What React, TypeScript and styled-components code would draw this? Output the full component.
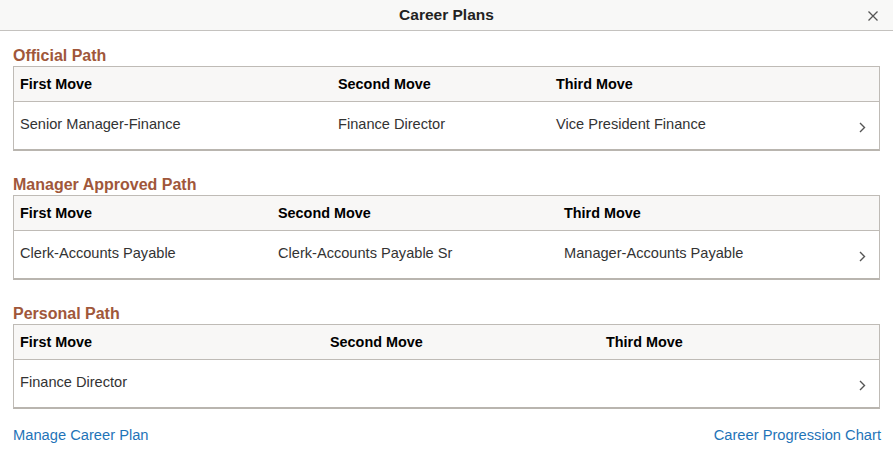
import React, { ReactElement } from 'react'
import styled, { createGlobalStyle } from 'styled-components'

interface Path {
    title: string;
    cols: [number, number];
    moves: string[];
}

const paths: Path[] = [
    { title: 'Official Path', cols: [318, 218], moves: ['Senior Manager-Finance', 'Finance Director', 'Vice President Finance'] },
    { title: 'Manager Approved Path', cols: [258, 286], moves: ['Clerk-Accounts Payable', 'Clerk-Accounts Payable Sr', 'Manager-Accounts Payable'] },
    { title: 'Personal Path', cols: [310, 276], moves: ['Finance Director', '', ''] },
]

const GlobalStyle = createGlobalStyle`
    html, body {
        margin: 0;
        padding: 0;
        background: #ffffff;
        font-family: "Liberation Sans", Arial, sans-serif;
        color: #333333;
    }
`

const Dialog = styled.div`
    width: 893px;
    height: 462px;
    display: flex;
    flex-direction: column;
    background: #fff;
`
const Header = styled.header`
    height: 30px;
    border-bottom: 1px solid #c4c2bf;
    background: #f8f8f7;
    display: flex;
    align-items: center;
    justify-content: center;
    position: relative;
`
const Title = styled.h1`
    margin: 0;
    font-size: 15.5px;
    font-weight: 700;
    color: #222;
`
const Close = styled.button`
    position: absolute;
    right: 14px;
    top: 10px;
    width: 12px;
    height: 12px;
    padding: 0;
    border: 0;
    background: none;
    display: flex;
`
const Body = styled.main`
    padding: 14px 13px 0 13px;
    display: flex;
    flex-direction: column;
    gap: 23px;
`
const Section = styled.section`
    display: flex;
    flex-direction: column;
    gap: 1px;
`
const Heading = styled.h2`
    margin: 0;
    height: 20px;
    line-height: 22px;
    font-size: 16px;
    font-weight: 700;
    color: #a0573a;
`
const Table = styled.div`
    border: 1px solid #bfbbb6;
    border-bottom-width: 2px;
    border-bottom-color: #b9b5af;
`
const Row = styled.div<{ $cols: [number, number]; $head?: boolean }>`
    display: grid;
    grid-template-columns: ${p => p.$cols[0]}px ${p => p.$cols[1]}px 1fr 40px;
    align-items: center;
    height: ${p => (p.$head ? '34px' : '47px')};
    background: ${p => (p.$head ? '#f8f7f6' : '#fff')};
    border-bottom: ${p => (p.$head ? '1px solid #bfbbb6' : 'none')};
`
const Cell = styled.div<{ $head?: boolean }>`
    padding-left: 6px;
    font-size: ${p => (p.$head ? '14.4px' : '14.6px')};
    font-weight: ${p => (p.$head ? 700 : 400)};
    color: ${p => (p.$head ? '#000' : '#333')};
    white-space: nowrap;
    padding-bottom: ${p => (p.$head ? '0' : '3px')};
`
const Chevron = styled.div`
    display: flex;
    justify-content: flex-end;
    padding-right: 13px;
    padding-top: 3px;
`
const Footer = styled.footer`
    display: flex;
    justify-content: space-between;
    padding: 16px 12px 0 13px;
`
const Link = styled.a`
    font-size: 14.7px;
    line-height: 20px;
    color: #1f74b8;
    text-decoration: none;
    cursor: pointer;
`

function PathTable({ path }: { path: Path }): ReactElement {
    return (
        <Section>
            <Heading>{path.title}</Heading>
            <Table>
                <Row $cols={path.cols} $head>
                    <Cell $head>First Move</Cell>
                    <Cell $head>Second Move</Cell>
                    <Cell $head>Third Move</Cell>
                    <div />
                </Row>
                <Row $cols={path.cols}>
                    {path.moves.map((m, i) => <Cell key={i}>{m}</Cell>)}
                    <Chevron>
                        <svg width="7" height="11" viewBox="0 0 7 11">
                            <path d="M1 1 L5.5 5.5 L1 10" fill="none" stroke="#555" strokeWidth="1.4" />
                        </svg>
                    </Chevron>
                </Row>
            </Table>
        </Section>
    )
}

export default function App(): ReactElement {
    return (
        <>
            <GlobalStyle />
            <Dialog>
                <Header>
                    <Title>Career Plans</Title>
                    <Close aria-label="Close">
                        <svg width="12" height="12" viewBox="0 0 12 12">
                            <path d="M1.5 1.5 L10.5 10.5 M10.5 1.5 L1.5 10.5" stroke="#555" strokeWidth="1.3" />
                        </svg>
                    </Close>
                </Header>
                <Body>
                    {paths.map(p => <PathTable key={p.title} path={p} />)}
                </Body>
                <Footer>
                    <Link>Manage Career Plan</Link>
                    <Link>Career Progression Chart</Link>
                </Footer>
            </Dialog>
        </>
    )
}
